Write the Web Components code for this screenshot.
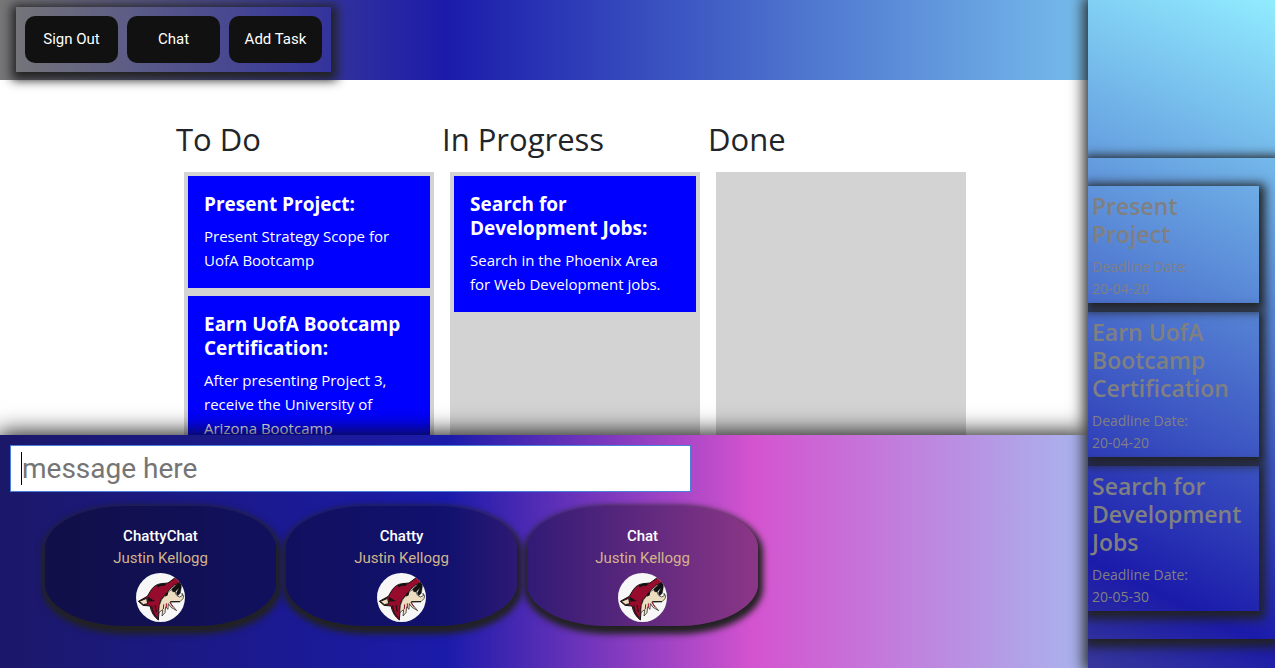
<!DOCTYPE html>
<html lang="en">
<head>
<meta charset="utf-8">
<title>Task Board</title>
<style>
  html, body { margin: 0; height: 100%; overflow: hidden; }
  body { --ui: "Open Sans", "Noto Sans", sans-serif; --roboto: Roboto, sans-serif; --glow: 1px 3px 10px 5px #222; font-family: var(--ui); color: #212529; background: #fff; }
</style>
</head>
<body>
<task-app>
  <top-nav slot="nav">
    <nav-button>Sign Out</nav-button>
    <nav-button>Chat</nav-button>
    <nav-button>Add Task</nav-button>
  </top-nav>
  <board-column slot="board" heading="To Do">
    <task-card heading="Present Project:">Present Strategy Scope for UofA Bootcamp</task-card>
    <task-card heading="Earn UofA Bootcamp Certification:">After presenting Project 3, receive the University of Arizona Bootcamp</task-card>
  </board-column>
  <board-column slot="board" heading="In Progress">
    <task-card heading="Search for Development Jobs:">Search in the Phoenix Area for Web Development jobs.</task-card>
  </board-column>
  <board-column slot="board" heading="Done"></board-column>
  <chat-panel slot="chat">
    <chat-bubble author="Justin Kellogg">ChattyChat</chat-bubble>
    <chat-bubble author="Justin Kellogg">Chatty</chat-bubble>
    <chat-bubble author="Justin Kellogg">Chat</chat-bubble>
  </chat-panel>
  <deadline-list slot="side">
    <deadline-card date="20-04-20">Present Project</deadline-card>
    <deadline-card date="20-04-20">Earn UofA Bootcamp Certification</deadline-card>
    <deadline-card date="20-05-30">Search for Development Jobs</deadline-card>
  </deadline-list>
</task-app>

<script>
class Base extends HTMLElement {
  constructor() {
    super();
    this.attachShadow({ mode: "open" });
  }
  connectedCallback() {
    this.shadowRoot.innerHTML = this.view();
  }
}

customElements.define("task-app", class extends Base {
  view() {
    return `<style>
      :host { display: grid; grid-template-columns: minmax(0, 1fr) 187px; height: 100vh; overflow: hidden; }
      .left { display: grid; grid-template-rows: 80px minmax(0, 1fr) 233px; min-height: 0; }
      main { display: flex; gap: 16px; padding: 40px 16px 0 176px; overflow: hidden; }
      ::slotted(top-nav), ::slotted(chat-panel), aside { position: relative; z-index: 1; }
      aside { z-index: 2; min-height: 0; padding-top: 158px; box-shadow: 0 0 14px 4px #222;
        background: linear-gradient(25deg, #777 0%, #1b1baa 35%, #91ecff 100%) 0 0 / 100% 136% no-repeat; }
    </style>
    <div class="left"><slot name="nav"></slot><main><slot name="board"></slot></main><slot name="chat"></slot></div>
    <aside><slot name="side"></slot></aside>`;
  }
});

customElements.define("top-nav", class extends Base {
  view() {
    return `<style>
      :host { display: block; height: 80px; background: linear-gradient(90deg, #777 0, #1b1baa 35vw, #91ecff 100vw); }
      nav { display: inline-flex; gap: 9px; padding: 9px; margin: 7px 16px; box-shadow: var(--glow); }
    </style><nav><slot></slot></nav>`;
  }
});

customElements.define("nav-button", class extends Base {
  view() {
    return `<style>
      :host { display: block; }
      button { width: 93px; height: 47px; padding: 0 0 2px; border: 0; border-radius: 10px; background: #111; color: #fff; font: 400 15px var(--roboto); cursor: pointer; }
    </style><button type="button"><slot></slot></button>`;
  }
});

customElements.define("board-column", class extends Base {
  view() {
    return `<style>
      :host { display: flex; flex-direction: column; width: 250px; }
      h2 { margin: 0 0 14px; font-size: 31px; line-height: 38px; font-weight: 500; }
      .lane { box-sizing: border-box; width: 250px; margin-left: 8px; flex: 1; display: flex; flex-direction: column; gap: 8px; padding: 4px; background: #d3d3d3; }
    </style><h2>${this.getAttribute("heading")}</h2><div class="lane"><slot></slot></div>`;
  }
});

customElements.define("task-card", class extends Base {
  view() {
    return `<style>
      :host { display: block; padding: 16px; background: #00f; color: #fff; }
      h5 { margin: 0 0 8px; font-size: 19px; line-height: 24px; font-weight: 700; }
      p { margin: 0; font-size: 15px; line-height: 24px; }
    </style><h5>${this.getAttribute("heading")}</h5><p><slot></slot></p>`;
  }
});

customElements.define("chat-panel", class extends Base {
  view() {
    return `<style>
      :host { display: block; font-family: var(--roboto); box-shadow: 0 0 22px 2px #111;
        background: linear-gradient(90deg, #1b1869 0, #1b1baa 35vw, #d453cf 59vw, #91ecff 100vw); }
      .field { position: relative; display: block; width: 681px; max-width: calc(100% - 20px); margin: 10px 10px 14px; }
      .field::after { content: ""; position: absolute; left: 11px; top: 7px; width: 1px; height: 33px; background: #000; }
      input { display: block; box-sizing: border-box; width: 100%; height: 47px; padding: 0 11px; border: 1px solid #4a80dc; border-radius: 0; outline: 0; background: #fff; font: 400 28px var(--roboto); }
      input::placeholder { color: #757575; opacity: 1; }
      .list { display: flex; gap: 10px; padding-left: 45px; }
    </style>
    <label class="field"><input type="text" placeholder="message here" aria-label="Message"></label>
    <div class="list"><slot></slot></div>`;
  }
});

customElements.define("chat-bubble", class extends Base {
  view() {
    return `<style>
      :host { box-sizing: border-box; display: flex; flex-direction: column; align-items: center; width: 231px; height: 120px; padding-top: 19px;
        border-radius: 35%; background: rgba(0,0,0,.35); box-shadow: 1px 4px 6px 4px #222; font-size: 15px; line-height: 22px; color: #fff; }
      strong { font-weight: 500; }
      .author { color: #d2b48c; }
      svg { width: 49px; height: 49px; margin-top: 4px; flex: none; border-radius: 50%; overflow: hidden; }
    </style>
    <strong><slot></slot></strong><span class="author">${this.getAttribute("author")}</span>
    <svg viewBox="0 0 147 147" aria-hidden="true">
      <rect width="147" height="147" fill="#f7f7f7"/>
      <g stroke="#111" stroke-linejoin="round">
        <path fill="#970b2c" stroke-width="3" d="M7 85 34 70 46 50Q57 34 76 32L96 30 119 13Q126 17 137 27L116 36 101 49 88 65 75 80 70 97 69 116 67 141Q48 127 42 99L21 97Z"/>
        <path fill="#ecdcc0" stroke-width="3" d="M10 85 32 76 35 92 22 95Z"/>
        <path fill="#ecdcc0" stroke-width="2" d="M89 65 101 53 114 47 121 66 130 72 139 68 138 61 143 69 141 77 132 86 102 87 106 94 122 113 105 103 97 92 96 109 89 102 87 119 78 129 80 110 68 119 70 97 76 81Z"/>
        <path fill="#111" stroke-width="1" d="M107 48 126 31 137 27 136 43 133 61 125 68 121 60 129 44 117 57 110 56Z"/>
      </g>
      <path fill="#111" d="M62 38Q73 29 91 33L84 39Q73 36 66 43ZM35 71 50 80 48 85 36 81ZM88 62 97 56 95 67 87 71Z"/>
      <path fill="none" stroke="#970b2c" stroke-width="3" d="M83 94 82 108M91 91 91 104M102 88 110 101"/>
      <path fill="none" stroke="#111" stroke-width="3" d="M36 84 55 83M47 98Q49 121 64 134M103 86H132M57 96 61 117"/>
    </svg>`;
  }
});

customElements.define("deadline-list", class extends Base {
  view() {
    return `<style>
      :host { display: flex; flex-direction: column; gap: 9px; padding: 28px 16px 28px 0; box-shadow: var(--glow); clip-path: inset(-20px 0 -20px 0); }
    </style><slot></slot>`;
  }
});

customElements.define("deadline-card", class extends Base {
  view() {
    return `<style>
      :host { display: block; padding: 6px 16px 3px 4px; box-shadow: var(--glow); color: #808080; }
      h4 { margin: 0 -16px 8px 0; font-size: 23px; line-height: 28px; font-weight: 600; }
      p { margin: 0; font-size: 14px; line-height: 22px; }
      span { display: block; }
    </style><h4><slot></slot></h4><p>Deadline Date: <span>${this.getAttribute("date")}</span></p>`;
  }
});
</script>
</body>
</html>
